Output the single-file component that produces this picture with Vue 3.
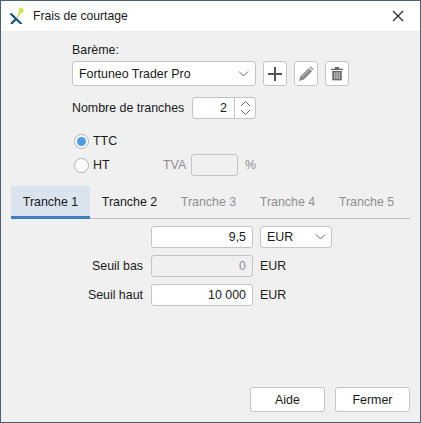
<template>
  <div class="fenetre">
    <header class="titre">
      <svg class="logo" width="16" height="16" viewBox="0 0 16 16">
        <path d="M.5 5.5 L11.5 16 M1 16 L6 11" stroke="#14527f" stroke-width="2.2" fill="none" />
        <path d="M7 9.5 L10.5 4" stroke="#c9d94a" stroke-width="1.6" fill="none" />
        <circle cx="11" cy="2.6" r="2.6" fill="#d5e04e" />
      </svg>
      <span class="titre-texte">Frais de courtage</span>
      <svg class="fermer" width="12" height="12" viewBox="0 0 12 12">
        <path d="M1 1 L11 11 M11 1 L1 11" stroke="#222" stroke-width="1.1" fill="none" />
      </svg>
    </header>

    <main class="corps">
      <section class="haut">
        <label class="bareme-label">Barème:</label>
        <div class="bareme">
          <div class="champ select select-bareme">
            <span>{{ bareme }}</span>
            <svg class="chevron" width="11" height="6" viewBox="0 0 11 6">
              <path d="M1 .5 L5.5 5 L10 .5" stroke="#666" fill="none" />
            </svg>
          </div>
          <div class="actions">
            <button class="carre">
              <svg width="14" height="14" viewBox="0 0 14 14">
                <path d="M7 0 V14 M0 7 H14" stroke="#555" stroke-width="2" fill="none" />
              </svg>
            </button>
            <button class="carre">
              <svg width="16" height="16" viewBox="0 0 17 17">
                <path d="M1 16 L2.5 11 L11.5 2 L15 5.5 L6 14.5 Z" fill="#8a8a8a" />
                <path d="M12.5 1 L13.5 .6 L16.4 3.5 L16 4.5 Z" fill="#777" />
                <path d="M4 11.5 L12 3.5" stroke="#ccc" fill="none" />
              </svg>
            </button>
            <button class="carre">
              <svg width="12" height="15" viewBox="0 0 14 16">
                <path d="M0 2.5 H14 V4 H0 Z M4.5 2.5 V.5 H9.5 V2.5" fill="#666" />
                <path d="M1.5 5 H12.5 V16 H1.5 Z" fill="#666" />
                <path d="M4.5 6.5 V14.5 M7 6.5 V14.5 M9.5 6.5 V14.5" stroke="#f4f4f4" fill="none" />
              </svg>
            </button>
          </div>
        </div>

        <div class="tranches">
          <span>Nombre de tranches</span>
          <div class="spin">
            <span class="spin-val">{{ nbTranches }}</span>
            <span class="spin-btn">
              <svg width="11" height="16" viewBox="0 0 11 16">
                <path d="M1 6 L5.5 1.5 L10 6 M1 10 L5.5 14.5 L10 10" stroke="#666" fill="none" />
              </svg>
            </span>
          </div>
        </div>

        <div class="taxes">
          <div class="radio-ligne">
            <span class="radio actif"></span>
            <span>TTC</span>
          </div>
          <div class="radio-ligne">
            <span class="radio"></span>
            <span class="ht">HT</span>
            <span class="gris tva">TVA</span>
            <span class="champ tva-champ"></span>
            <span class="gris">%</span>
          </div>
        </div>
      </section>

      <nav class="onglets">
        <div
          v-for="(t, i) in onglets"
          :key="t"
          class="onglet"
          :class="{ actif: i === 0, gris: i >= nbTranches }"
        >{{ t }}</div>
      </nav>

      <section class="form">
        <span></span>
        <div class="champ nombre">9,5</div>
        <div class="champ select select-devise">
          <span>EUR</span>
          <svg class="chevron" width="11" height="6" viewBox="0 0 11 6">
            <path d="M1 .5 L5.5 5 L10 .5" stroke="#666" fill="none" />
          </svg>
        </div>

        <label>Seuil bas</label>
        <div class="champ nombre off">0</div>
        <span>EUR</span>

        <label>Seuil haut</label>
        <div class="champ nombre">10 000</div>
        <span>EUR</span>
      </section>

      <footer class="pied">
        <button class="bouton">Aide</button>
        <button class="bouton">Fermer</button>
      </footer>
    </main>
  </div>
</template>

<script setup>
import { ref } from 'vue'

const bareme = ref('Fortuneo Trader Pro')
const nbTranches = ref(2)
const onglets = ['Tranche 1', 'Tranche 2', 'Tranche 3', 'Tranche 4', 'Tranche 5']
</script>

<style>
html, body { margin: 0; background: #f0f0f0; }
</style>

<style scoped>
.fenetre {
  box-sizing: border-box;
  width: 421px;
  height: 423px;
  border: 1px solid #4b6070;
  background: #f0f0f0;
  display: flex;
  flex-direction: column;
  font: 12.4px "Liberation Sans", Arial, sans-serif;
  color: #1a1a1a;
}
.titre {
  height: 30px;
  background: #fff;
  display: flex;
  align-items: center;
  padding: 0 16px 0 9px;
  flex: none;
}
.logo { margin-right: 7px; }
.titre-texte { flex: 1; font-size: 12.2px; }
.corps {
  flex: 1;
  display: flex;
  flex-direction: column;
  padding: 0 10px 10px;
}
.haut { padding-left: 61px; padding-top: 13px; }
.bareme-label { display: block; height: 17px; line-height: 13px; }
.bareme { display: flex; gap: 7px; }
.champ {
  box-sizing: border-box;
  background: #fff;
  border: 1px solid #c4c4c4;
  border-radius: 3px;
  display: flex;
  align-items: center;
}
.select { justify-content: space-between; padding: 0 6px 0 6px; }
.select-bareme { width: 184px; height: 25px; }
.actions { display: flex; gap: 7px; }
.carre {
  box-sizing: border-box;
  width: 24px;
  height: 25px;
  padding: 0;
  background: #fff;
  border: 1px solid #c4c4c4;
  border-radius: 3px;
  display: flex;
  align-items: center;
  justify-content: center;
}
.tranches {
  display: flex;
  align-items: center;
  margin-top: 11px;
  height: 22px;
}
.tranches > span { width: 120px; }
.spin {
  box-sizing: border-box;
  width: 64px;
  height: 22px;
  background: #fff;
  border: 1px solid #c4c4c4;
  border-radius: 3px;
  display: flex;
}
.spin-val { flex: 1; text-align: right; padding-right: 7px; line-height: 20px; }
.spin-btn {
  width: 20px;
  border-left: 1px solid #c4c4c4;
  display: flex;
  align-items: center;
  justify-content: center;
}
.taxes { margin-top: 10px; }
.radio-ligne { display: flex; align-items: center; height: 24px; }
.radio {
  box-sizing: border-box;
  width: 15px;
  height: 15px;
  border: 1px solid #b0b0b0;
  border-radius: 50%;
  background: #fff;
  margin: 0 4px 0 2px;
  position: relative;
}
.radio.actif::after {
  content: '';
  position: absolute;
  inset: 2px;
  border-radius: 50%;
  background: #4a9be8;
}
.ht { width: 70px; }
.gris { color: #8f8f8f; }
.tva { width: 28px; }
.tva-champ {
  width: 47px;
  height: 22px;
  background: #f0f0f0;
  margin-right: 7px;
}
.onglets {
  display: flex;
  margin-top: 9px;
  border-bottom: 1px solid #c0c0c0;
  height: 32px;
}
.onglet {
  width: 79px;
  text-align: center;
  line-height: 33px;
  height: 33px;
  box-sizing: border-box;
}
.onglet.actif {
  background: #d9e4ee;
  border-bottom: 3px solid #3b7cc4;
}
.form {
  display: grid;
  grid-template-columns: 133px 102px 72px;
  column-gap: 7px;
  row-gap: 7px;
  grid-auto-rows: 22px;
  align-items: center;
  margin-top: 7px;
}
.form label { text-align: right; padding-right: 1px; }
.nombre {
  height: 22px;
  justify-content: flex-end;
  padding-right: 6px;
}
.nombre.off { background: #f0f0f0; color: #8f8f8f; }
.select-devise { height: 22px; padding-right: 5px; }
.pied {
  margin-top: auto;
  display: flex;
  justify-content: flex-end;
  gap: 10px;
}
.bouton {
  box-sizing: border-box;
  width: 75px;
  height: 25px;
  padding: 0;
  background: #fff;
  border: 1px solid #c4c4c4;
  border-radius: 3px;
  font: inherit;
  color: inherit;
}
</style>
